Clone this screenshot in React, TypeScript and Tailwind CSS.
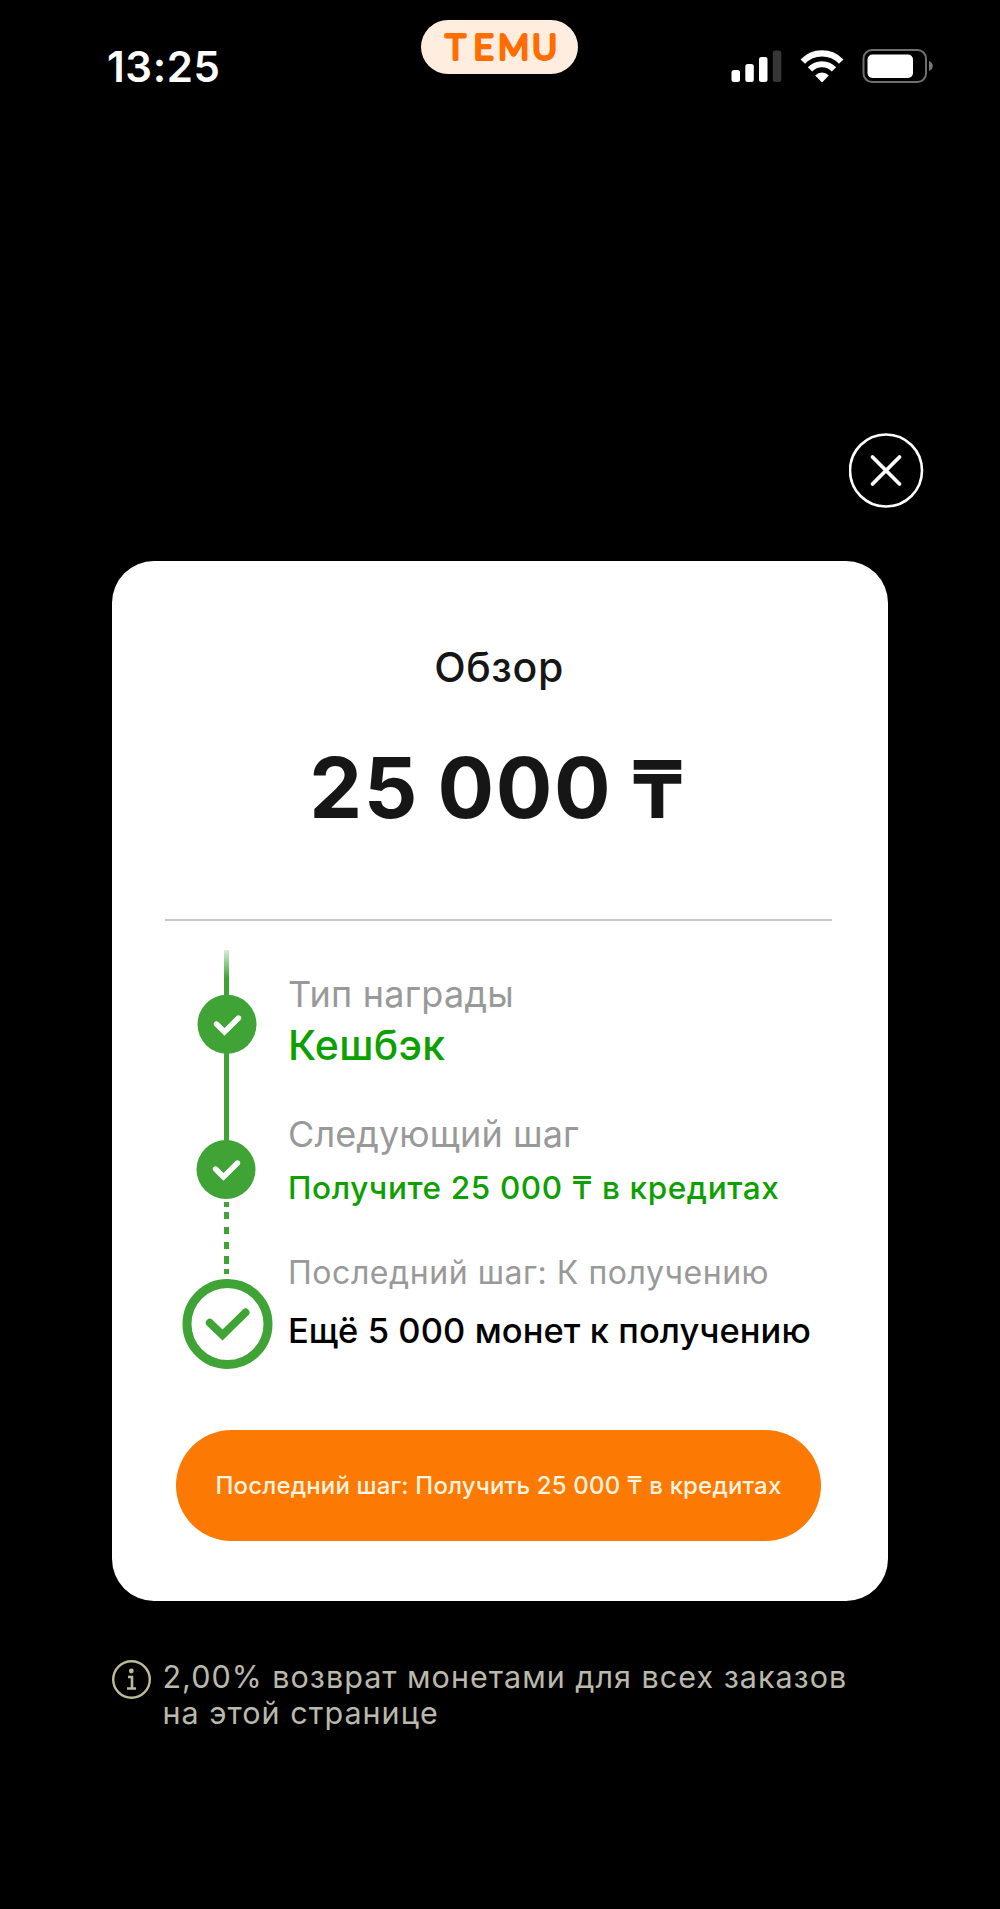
interface Step {
  label: string;
  value: string;
  labelClass: string;
  valueClass: string;
}

const steps: Step[] = [
  {
    label: "Тип награды",
    value: "Кешбэк",
    labelClass: "mt-[22px] text-[36px] leading-[44px] tracking-[0.25px]",
    valueClass: "mt-[5px] text-[41px] leading-[48px] tracking-[0.3px] font-medium text-[#0ca000]",
  },
  {
    label: "Следующий шаг",
    value: "Получите 25 000 ₸ в кредитах",
    labelClass: "mt-[43px] text-[36px] leading-[44px] tracking-[0.1px]",
    valueClass: "mt-3 text-[31.5px] leading-[40px] tracking-[0.62px] font-medium text-[#0ca000]",
  },
  {
    label: "Последний шаг: К получению",
    value: "Ещё 5 000 монет к получению",
    labelClass: "mt-[45px] text-[32px] leading-[40px] tracking-[0.55px]",
    valueClass: "mt-4 text-[34.5px] leading-[44px] tracking-[0.07px] font-medium text-black",
  },
];

const StatusIcons = () => (
  <svg className="mt-[49px] h-[34px] w-[204px]" viewBox="731 49 204 34" fill="none">
    {/* Signal */}
    <rect x="731.5" y="70" width="8.5" height="12" rx="2.5" fill="#fff" />
    <rect x="745.3" y="64" width="8.5" height="18" rx="2.5" fill="#fff" />
    <rect x="759" y="57" width="8.5" height="25" rx="2.5" fill="#fff" />
    <rect x="772.8" y="50.5" width="8.5" height="31.5" rx="2.5" fill="#363636" />
    {/* Wi-Fi */}
    <path d="M802.8 61.6A26.5 26.5 0 0 1 841.2 61.6" stroke="#fff" strokeWidth="6.2" />
    <path d="M810 69.4A16.5 16.5 0 0 1 834 69.4" stroke="#fff" strokeWidth="6" />
    <path d="M815.2 75.4A9.5 9.5 0 0 1 828.8 75.4L823 81.4Q822 82.4 821 81.4Z" fill="#fff" />
    {/* Battery */}
    <rect x="863.5" y="50" width="62.5" height="32" rx="8.5" stroke="#6f6f6f" strokeWidth="2" />
    <rect x="867.5" y="54.5" width="45.5" height="23.5" rx="5" fill="#fff" />
    <path d="M929 61C934 63 934 69 929 71Z" fill="#777" />
  </svg>
);

const Logo = () => (
  <div className="mt-5 flex h-[54px] w-[157px] items-center justify-center rounded-full bg-[#ffeee0]">
    <svg className="h-[54px] w-[157px]" viewBox="0 0 157 54">
      <text
        x="34.5 62.5 92.5 123.5"
        y="39.3"
        textAnchor="middle"
        fontFamily="Lato, sans-serif"
        fontSize="33.8"
        fontWeight="300"
        fill="#ff6d00"
        stroke="#ff6d00"
        strokeWidth="4"
        strokeLinejoin="round"
      >
        TEMU
      </text>
    </svg>
  </div>
);

const Timeline = () => (
  <svg className="h-[420px] w-[96px] shrink-0" viewBox="180 950 96 420" fill="none">
    <defs>
      <linearGradient id="fade" x1="0" y1="950" x2="0" y2="978" gradientUnits="userSpaceOnUse">
        <stop offset="0" stopColor="#3fa335" stopOpacity="0.2" />
        <stop offset="1" stopColor="#3fa335" />
      </linearGradient>
    </defs>
    <rect x="224" y="950" width="5" height="210" fill="url(#fade)" />
    <g fill="#3fa335">
      <rect x="224" y="1202" width="5" height="5" />
      <rect x="224" y="1212" width="5" height="7" />
      <rect x="224" y="1227" width="5" height="7" />
      <rect x="224" y="1242" width="5" height="7" />
      <rect x="224" y="1256" width="5" height="8" />
      <rect x="224" y="1269" width="5" height="5" />
      <circle cx="227" cy="1024.3" r="29.5" />
      <circle cx="226" cy="1169.5" r="29.5" />
    </g>
    <g stroke="#fff" strokeWidth="5.4" strokeLinecap="round">
      <path d="M216.5 1024L224.5 1032L238.5 1018" />
      <path d="M215.5 1169L223.5 1177L237.5 1163" />
    </g>
    <circle cx="227.5" cy="1324" r="40.5" stroke="#3fa335" strokeWidth="9" />
    <path d="M209.8 1322.8L222.5 1335L245.5 1312.5" stroke="#3fa335" strokeWidth="8" strokeLinecap="round" />
  </svg>
);

const App = () => {
  return (
    <div className="flex h-[1909px] w-[1000px] flex-col overflow-hidden bg-black font-[Inter,sans-serif] whitespace-nowrap">
      {/* Status bar */}
      <header className="flex h-[433px] items-start justify-between pr-[65px] pl-[107px]">
        <div className="mt-[41px] w-[161px] text-[42px] leading-[52px] font-semibold tracking-[0.6px] text-white">13:25</div>
        <Logo />
        <StatusIcons />
      </header>

      <button className="mr-[76.5px] self-end" aria-label="Закрыть">
        <svg className="size-[75px]" viewBox="0 0 75 75" fill="none" stroke="#fff">
          <circle cx="37" cy="37.5" r="36" strokeWidth="2.6" />
          <path d="M23.5 24L50.5 51M50.5 24L23.5 51" strokeWidth="3.8" strokeLinecap="round" />
        </svg>
      </button>

      {/* Reward card */}
      <main className="mx-[112px] mt-[52.5px] flex h-[1040.5px] flex-col rounded-[42px] bg-white">
        <h1 className="mt-[82.5px] pr-0.5 text-center text-[41px] leading-[48px] font-medium tracking-[0.6px] text-[#161616]">Обзор</h1>
        <p className="mt-[47px] pr-[5px] text-center text-[84px] leading-[100px] font-bold tracking-[1.6px] text-[#161616] [word-spacing:-3px]">
          25 000 <span className="text-[80px]">₸</span>
        </p>
        <div className="mt-[80px] ml-[53px] h-[2px] w-[667px] bg-[#c9c9c9]" />

        <div className="mt-[28.5px] flex pl-[68px]">
          <Timeline />
          <div className="ml-3">
            {steps.map((step) => (
              <div key={step.label} className="flex flex-col items-start">
                <span className={`text-[#999] ${step.labelClass}`}>{step.label}</span>
                <span className={step.valueClass}>{step.value}</span>
              </div>
            ))}
          </div>
        </div>

        <button className="mt-[60px] ml-[64px] h-[111px] w-[645px] rounded-full bg-[#fc7904] pt-px text-[24px] font-medium tracking-[0.16px] text-[#fff4df]">
          Последний шаг: Получить 25 000 ₸ в кредитах
        </button>
      </main>

      {/* Cashback note */}
      <footer className="mt-[57.5px] ml-[112px] flex">
        <svg className="mt-px size-[39px] shrink-0" viewBox="0 0 39 39" fill="none" stroke="#bdba98">
          <circle cx="19.5" cy="19.5" r="18.3" strokeWidth="2.4" />
          <circle cx="19.3" cy="11" r="2.4" fill="#bdba98" stroke="none" />
          <path d="M16 17H20V28M15 28.5H24" strokeWidth="2.6" />
        </svg>
        <p className="ml-[11.5px] text-[30.5px] leading-[36px] tracking-[1.02px] text-[#bab9ab]">
          2,00% возврат монетами для всех заказов
          <br />
          на этой странице
        </p>
      </footer>
    </div>
  );
};

export default App;
